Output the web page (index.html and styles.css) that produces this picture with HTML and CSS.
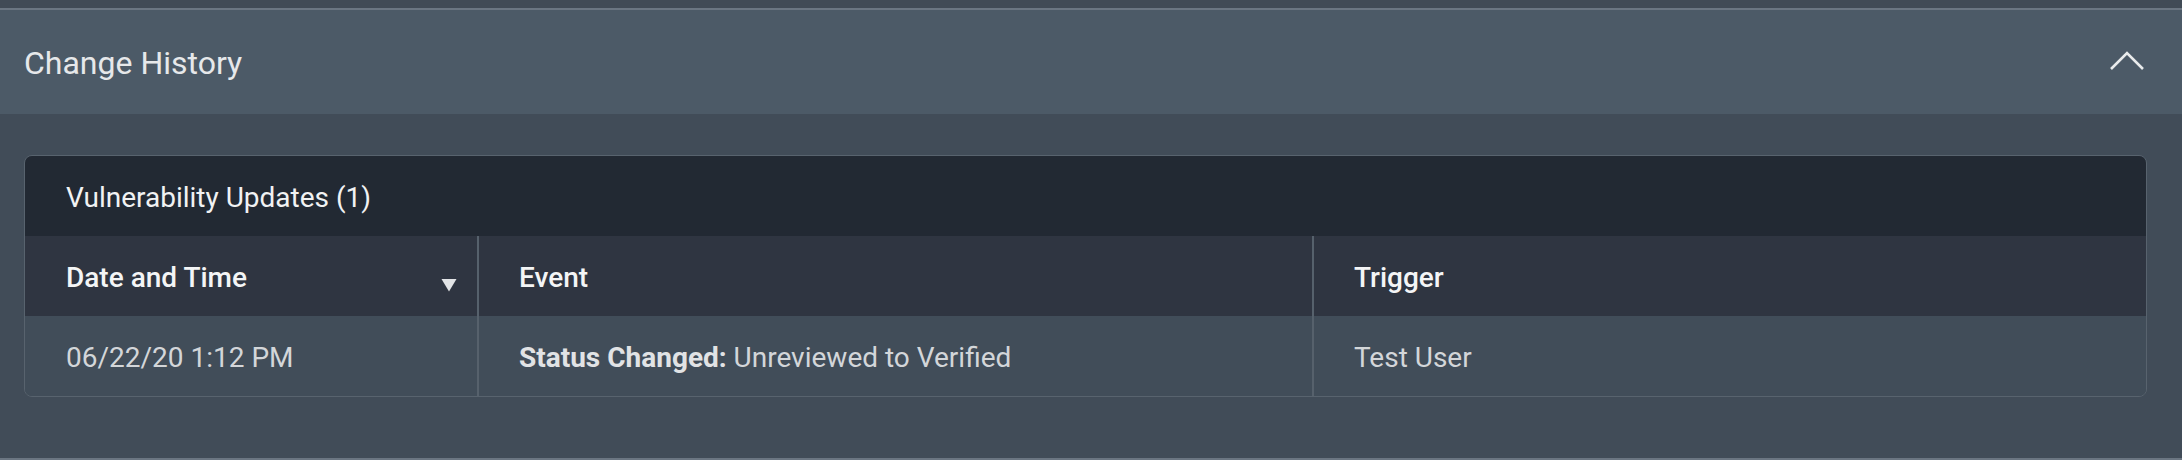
FILE: index.html
```html
<!DOCTYPE html>
<html>
<head>
<meta charset="utf-8">
<link rel="stylesheet" href="styles.css">
</head>
<body>
<div class="topbar"></div>
<section class="panel">
  <header class="panel-header">
    <h2 class="panel-title">Change History</h2>
    <svg class="chevron" width="36" height="22" viewBox="0 0 36 22"><polyline points="2,19 18,3 34,19" fill="none" stroke="#e9ebec" stroke-width="2.6"/></svg>
  </header>
  <div class="panel-body">
    <div class="card">
      <div class="card-title">Vulnerability Updates (1)</div>
      <div class="table">
        <div class="row head">
          <div class="cell first">
            <span>Date and Time</span>
            <svg class="sort" width="16" height="14" viewBox="0 0 16 14"><polygon points="0.5,1 15.5,1 8,13.5" fill="#e2e4e6"/></svg>
          </div>
          <div class="cell">Event</div>
          <div class="cell">Trigger</div>
        </div>
        <div class="row data">
          <div class="cell first">06/22/20 1:12 PM</div>
          <div class="cell"><b>Status Changed:</b>&nbsp;Unreviewed to Verified</div>
          <div class="cell">Test User</div>
        </div>
      </div>
    </div>
  </div>
</section>
</body>
</html>
```

FILE: styles.css
```css
* { box-sizing: border-box; }
html, body { margin: 0; padding: 0; }
body {
  background: #414b56;
  font-family: Roboto, "Liberation Sans", sans-serif;
  width: 2182px;
  height: 460px;
  overflow: hidden;
}
.topbar { height: 8px; background: #414b56; }
.panel {
  border-top: 2px solid #6b7682;
  border-bottom: 2px solid #6b7682;
  background: #414c58;
}
.panel-header {
  height: 104px;
  background: #4c5a67;
  display: flex;
  align-items: center;
  justify-content: space-between;
  padding: 1px 37px 0 24px;
}
.panel-title {
  margin: 0;
  font-size: 32px;
  font-weight: 400;
  color: #e6e8ea;
}
.chevron { display: block; margin-top: -3px; }
.panel-body {
  padding: 41px 35px 61px 24px;
}
.card {
  border: 1px solid #58636e;
  border-radius: 8px;
  overflow: hidden;
}
.card-title {
  height: 80px;
  background: #222933;
  display: flex;
  align-items: center;
  padding: 2px 0 0 41px;
  font-size: 28px;
  color: #f1f2f3;
}
.row {
  display: grid;
  grid-template-columns: 452px 835px 1fr;
  height: 80px;
}
.row.head { background: #2f3541; font-weight: 500; color: #f4f5f6; }
.row.data { background: #414d59; color: #d3d6d9; }
.cell {
  display: flex;
  align-items: center;
  padding: 2px 0 0 40px;
  font-size: 28px;
  border-left: 2px solid #56616c;
}
.cell.first { border-left: none; padding-left: 41px; }
.row.head .cell.first { justify-content: space-between; padding-right: 20px; }
.sort { display: block; margin-top: 16px; }
.cell b { font-weight: 700; color: #e1e3e5; }
```
